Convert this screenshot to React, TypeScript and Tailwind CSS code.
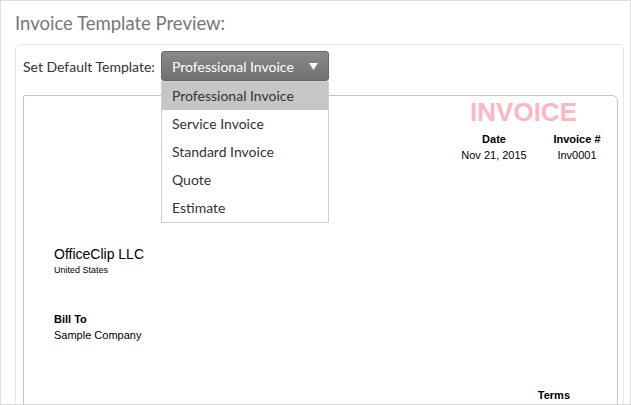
import React from "react";

const items = ["Professional Invoice", "Service Invoice", "Standard Invoice", "Quote", "Estimate"];

export default function App() {
  const ui = { fontFamily: "Lato, 'Open Sans', sans-serif" };
  const arial = { fontFamily: "'Liberation Sans', Arial, sans-serif" };
  return (
    <div className="w-[631px] h-[405px] overflow-hidden bg-white border border-[#dcdcdc] box-border" style={ui}>
      <div className="pl-[14px] pt-[10px] text-[18.5px] leading-[24px] text-[#777]">Invoice Template Preview:</div>
      <div className="ml-[14px] mr-[6px] mt-[9px] h-[400px] border border-[#e6e6e6] rounded-[5px] pl-[7px] pr-[5px] pt-[6px]">
        <div className="flex items-center h-[30px]">
          <span className="text-[14px] text-[#333] w-[138px]">Set Default Template:</span>
          <div className="relative">
            <div className="w-[168px] h-[30px] rounded-[3px] border border-[#666] bg-gradient-to-b from-[#8a8a8a] to-[#707070] flex items-center justify-between pl-[10px] pr-[10px] text-white text-[14px]">
              <span>Professional Invoice</span>
              <svg width="9" height="7" viewBox="0 0 9 7"><path d="M0 0h9L4.5 7z" fill="#fff" /></svg>
            </div>
            <div className="absolute left-0 top-[30px] w-[168px] bg-white border border-[#cfcfcf] z-10">
              {items.map((t, i) => (
                <div key={t} className={`h-[28px] leading-[28px] pl-[10px] text-[14px] text-[#333] ${i === 0 ? "bg-[#c6c6c6]" : ""}`}>{t}</div>
              ))}
            </div>
          </div>
        </div>
        <div className="mt-[14px] h-[400px] border border-[#c4c4c4] rounded-tr-[6px] rounded-tl-[2px] text-black" style={arial}>
          <div className="flex justify-end pr-[40px] pt-[1px]">
            <span className="text-[26px] leading-[30px] font-bold text-[#ffb6c1]">INVOICE</span>
          </div>
          <div className="flex justify-end pr-[4px] mt-[4px] gap-[11px] text-[11px]">
            <div className="w-[72px] text-center">
              <div className="font-bold leading-[16px]">Date</div>
              <div className="leading-[16px]">Nov 21, 2015</div>
            </div>
            <div className="w-[72px] text-center">
              <div className="font-bold leading-[16px]">Invoice #</div>
              <div className="leading-[16px]">Inv0001</div>
            </div>
          </div>
          <div className="pl-[30px] mt-[82px]">
            <div className="text-[14px] leading-[18px]">OfficeClip LLC</div>
            <div className="text-[9px] leading-[14px]">United States</div>
          </div>
          <div className="pl-[30px] mt-[34px] text-[11px]">
            <div className="font-bold leading-[16px]">Bill To</div>
            <div className="leading-[16px]">Sample Company</div>
          </div>
          <div className="flex justify-end pr-[47px] mt-[44px] text-[11px]">
            <span className="font-bold leading-[16px]">Terms</span>
          </div>
        </div>
      </div>
    </div>
  );
}
